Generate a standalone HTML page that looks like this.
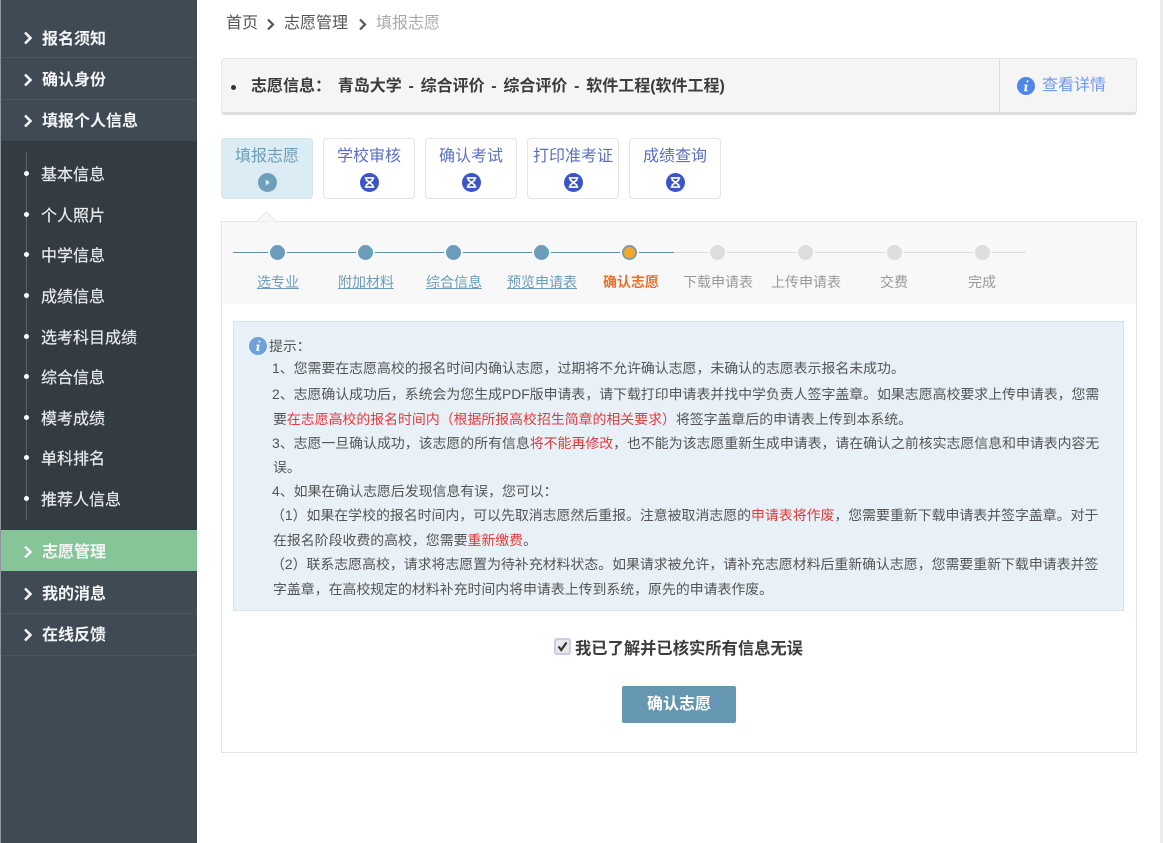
<!DOCTYPE html>
<html lang="zh"><head><meta charset="utf-8"><title>确认志愿</title>
<style>
*{box-sizing:border-box}
html,body{margin:0;padding:0;width:1163px;height:843px;overflow:hidden;background:#fff}
body{position:relative;font-family:"Liberation Sans","Noto Sans CJK SC",sans-serif;color:#444}
.a{position:absolute;white-space:nowrap}
#side{position:absolute;left:0;top:0;width:197px;height:843px;background:#3f4a54;border-left:1px solid #8d949a}
.sep{position:absolute;left:1px;width:196px;height:1px;background:#4a555f}
.m{position:absolute;left:42px;font-size:16px;font-weight:700;color:#f4f5f6;line-height:22px;white-space:nowrap}
.chev{position:absolute;left:23px;width:10px;height:14px}
.s{position:absolute;left:41px;font-size:16px;color:#e8eaec;line-height:22px;white-space:nowrap;-webkit-text-stroke:.2px #e8eaec}
.dot{position:absolute;left:24px;width:5px;height:5px;border-radius:50%;background:#fff}
.tab{position:absolute;top:138px;height:61px;width:92px;border:1px solid #e4e4e4;border-radius:4px;background:#fff;text-align:center;color:#5a6fc4;font-size:16px;line-height:22px;padding-top:7px;white-space:nowrap}
.tab svg{position:absolute;left:36px;top:34px}
.st{position:absolute;top:272px;width:90px;text-align:center;font-size:14px;line-height:20px;white-space:nowrap}
.st.d{color:#6b9dbb;text-decoration:underline}
.st.g{color:#999}
.c{position:absolute;top:245px;width:15px;height:15px;border-radius:50%;border:2px solid #6b9dbb;background:#6b9dbb}
.c.g{background:#ddd;border-color:#ddd}
.l{position:absolute;left:248px;font-size:13.9px;line-height:20px;color:#555;white-space:nowrap}
.l.i{left:272px}
.l b{font-weight:400;color:#e23b3b}
</style></head><body>

<div id="side">
<div style="position:absolute;left:0;top:141px;width:196px;height:389px;background:#333b43"></div>
<div style="position:absolute;left:0;top:530px;width:196px;height:41px;background:#86c598"></div>
<div class="sep" style="top:57px;left:0"></div><div class="sep" style="top:99px;left:0"></div>
<div class="sep" style="top:613px;left:0"></div><div class="sep" style="top:655px;left:0"></div>
<div style="position:absolute;left:25px;top:152px;width:1px;height:368px;background:#59626b"></div>
</div>
<svg class="chev" style="top:31px" viewBox="0 0 10 14"><path d="M2 1.5 7.5 7 2 12.5" fill="none" stroke="#f4f5f6" stroke-width="2.6"/></svg><div class="m" style="top:29px">报名须知</div>
<svg class="chev" style="top:73px" viewBox="0 0 10 14"><path d="M2 1.5 7.5 7 2 12.5" fill="none" stroke="#f4f5f6" stroke-width="2.6"/></svg><div class="m" style="top:70px">确认身份</div>
<svg class="chev" style="top:114px" viewBox="0 0 10 14"><path d="M2 1.5 7.5 7 2 12.5" fill="none" stroke="#f4f5f6" stroke-width="2.6"/></svg><div class="m" style="top:111px">填报个人信息</div>
<div class="dot" style="top:171px"></div><div class="s" style="top:165px">基本信息</div>
<div class="dot" style="top:212px"></div><div class="s" style="top:206px">个人照片</div>
<div class="dot" style="top:252px"></div><div class="s" style="top:246px">中学信息</div>
<div class="dot" style="top:293px"></div><div class="s" style="top:287px">成绩信息</div>
<div class="dot" style="top:334px"></div><div class="s" style="top:328px">选考科目成绩</div>
<div class="dot" style="top:374px"></div><div class="s" style="top:368px">综合信息</div>
<div class="dot" style="top:415px"></div><div class="s" style="top:409px">模考成绩</div>
<div class="dot" style="top:455px"></div><div class="s" style="top:449px">单科排名</div>
<div class="dot" style="top:496px"></div><div class="s" style="top:490px">推荐人信息</div>
<svg class="chev" style="top:545px" viewBox="0 0 10 14"><path d="M2 1.5 7.5 7 2 12.5" fill="none" stroke="#f4f5f6" stroke-width="2.6"/></svg><div class="m" style="top:542px">志愿管理</div>
<svg class="chev" style="top:587px" viewBox="0 0 10 14"><path d="M2 1.5 7.5 7 2 12.5" fill="none" stroke="#f4f5f6" stroke-width="2.6"/></svg><div class="m" style="top:584px">我的消息</div>
<svg class="chev" style="top:628px" viewBox="0 0 10 14"><path d="M2 1.5 7.5 7 2 12.5" fill="none" stroke="#f4f5f6" stroke-width="2.6"/></svg><div class="m" style="top:625px">在线反馈</div>

<div style="position:absolute;left:1160px;top:0;width:3px;height:843px;background:#ececec"></div>

<div class="a" style="left:226px;top:13px;font-size:16px;line-height:22px;color:#555">首页</div>
<svg class="a" style="left:266px;top:18px" width="10" height="13" viewBox="0 0 10 13"><path d="M2 1.5 7 6.5 2 11.5" fill="none" stroke="#555" stroke-width="2.2"/></svg>
<div class="a" style="left:284px;top:13px;font-size:16px;line-height:22px;color:#555">志愿管理</div>
<svg class="a" style="left:358px;top:18px" width="10" height="13" viewBox="0 0 10 13"><path d="M2 1.5 7 6.5 2 11.5" fill="none" stroke="#555" stroke-width="2.2"/></svg>
<div class="a" style="left:376px;top:13px;font-size:16px;line-height:22px;color:#aaa">填报志愿</div>

<div style="position:absolute;left:221px;top:58px;width:916px;height:57px;background:#f5f5f5;border:1px solid #e6e6e6;border-bottom:3px solid #ddd;border-radius:4px"></div>
<div style="position:absolute;left:999px;top:59px;width:1px;height:53px;background:#dcdcdc"></div>
<div class="a" style="left:231px;top:85px;width:5px;height:5px;border-radius:50%;background:#333"></div>
<div class="a" style="left:251px;top:76px;font-size:16px;font-weight:700;line-height:22px;color:#3c3c3c;word-spacing:2.3px">志愿信息： 青岛大学 - 综合评价 - 综合评价 - 软件工程(软件工程)</div>
<svg class="a" style="left:1017px;top:77px" width="18" height="18" viewBox="0 0 17 17"><circle cx="8.5" cy="8.5" r="8.5" fill="#4f86e8"/><path d="M9.3 3.2h1.6l-.3 1.7H9zM7 7.2h3l-1 5h1l-.3 1.2H6.7l1-5h-1z" fill="#fff"/></svg>
<div class="a" style="left:1042px;top:75px;font-size:16px;line-height:22px;color:#6f9be8">查看详情</div>

<div class="tab" style="left:221px;background:#dcecf4;border-color:#d3e4ec;color:#6c9db8">填报志愿<svg width="19" height="19" viewBox="0 0 18 18"><circle cx="9" cy="9" r="9" fill="#6fa0ba"/><path d="M7.3 6l4 3-4 3z" fill="#dcecf4"/></svg></div>
<div class="tab" style="left:323px">学校审核<svg width="19" height="19" viewBox="0 0 18 18"><circle cx="9" cy="9" r="9" fill="#3b55c8"/><path d="M4.5 4.7h9M4.5 13.3h9M6 5v1.6L12 11.4V13M12 5v1.6L6 11.4V13" fill="none" stroke="#fff" stroke-width="1.6"/></svg></div>
<div class="tab" style="left:425px">确认考试<svg width="19" height="19" viewBox="0 0 18 18"><circle cx="9" cy="9" r="9" fill="#3b55c8"/><path d="M4.5 4.7h9M4.5 13.3h9M6 5v1.6L12 11.4V13M12 5v1.6L6 11.4V13" fill="none" stroke="#fff" stroke-width="1.6"/></svg></div>
<div class="tab" style="left:527px">打印准考证<svg width="19" height="19" viewBox="0 0 18 18"><circle cx="9" cy="9" r="9" fill="#3b55c8"/><path d="M4.5 4.7h9M4.5 13.3h9M6 5v1.6L12 11.4V13M12 5v1.6L6 11.4V13" fill="none" stroke="#fff" stroke-width="1.6"/></svg></div>
<div class="tab" style="left:629px">成绩查询<svg width="19" height="19" viewBox="0 0 18 18"><circle cx="9" cy="9" r="9" fill="#3b55c8"/><path d="M4.5 4.7h9M4.5 13.3h9M6 5v1.6L12 11.4V13M12 5v1.6L6 11.4V13" fill="none" stroke="#fff" stroke-width="1.6"/></svg></div>

<div style="position:absolute;left:221px;top:221px;width:916px;height:532px;background:#fff;border:1px solid #e3e3e3"></div>
<div style="position:absolute;left:222px;top:222px;width:914px;height:82px;background:#f8f8f8"></div>
<div style="position:absolute;left:259px;top:214px;width:15px;height:15px;background:#f8f8f8;border-left:1px solid #e3e3e3;border-top:1px solid #e3e3e3;transform:rotate(45deg);clip-path:polygon(0 0,100% 0,0 100%)"></div>

<div style="position:absolute;left:233px;top:252px;width:441px;height:1px;background:#6690aa"></div>
<div style="position:absolute;left:674px;top:252px;width:352px;height:1px;background:#ddd"></div>
<div style="position:absolute;left:268px;top:244px;width:19px;height:17px;background:#f8f8f8"></div><div class="c" style="left:270px"></div>
<div style="position:absolute;left:356px;top:244px;width:19px;height:17px;background:#f8f8f8"></div><div class="c" style="left:358px"></div>
<div style="position:absolute;left:444px;top:244px;width:19px;height:17px;background:#f8f8f8"></div><div class="c" style="left:446px"></div>
<div style="position:absolute;left:532px;top:244px;width:19px;height:17px;background:#f8f8f8"></div><div class="c" style="left:534px"></div>
<div style="position:absolute;left:620px;top:244px;width:19px;height:17px;background:#f8f8f8"></div><div class="c" style="left:622px;background:#efa82c;border-color:#7e9aa0"></div>
<div style="position:absolute;left:708px;top:244px;width:19px;height:17px;background:#f8f8f8"></div><div class="c g" style="left:710px"></div>
<div style="position:absolute;left:796px;top:244px;width:19px;height:17px;background:#f8f8f8"></div><div class="c g" style="left:798px"></div>
<div style="position:absolute;left:885px;top:244px;width:19px;height:17px;background:#f8f8f8"></div><div class="c g" style="left:887px"></div>
<div style="position:absolute;left:973px;top:244px;width:19px;height:17px;background:#f8f8f8"></div><div class="c g" style="left:975px"></div>

<div class="st d" style="left:233px">选专业</div>
<div class="st d" style="left:321px">附加材料</div>
<div class="st d" style="left:409px">综合信息</div>
<div class="st d" style="left:497px">预览申请表</div>
<div class="st" style="left:586px;color:#e8702a;font-weight:700">确认志愿</div>
<div class="st g" style="left:673px">下载申请表</div>
<div class="st g" style="left:761px">上传申请表</div>
<div class="st g" style="left:849px">交费</div>
<div class="st g" style="left:937px">完成</div>

<div style="position:absolute;left:233px;top:321px;width:891px;height:290px;background:#e8f1f7;border:1px solid #d3e5ef"></div>
<svg class="a" style="left:249px;top:337px" width="18" height="18" viewBox="0 0 18 18"><circle cx="9" cy="9" r="9" fill="#6fa3d8"/><path d="M9.8 3.6h1.7l-.3 1.8H9.5zM7.5 7.6h3l-1 5h1l-.3 1.2H7.2l1-5h-1z" fill="#fff"/></svg>
<div class="l" style="left:269px;top:336px">提示：</div>
<div class="l i" style="top:358px">1、您需要在志愿高校的报名时间内确认志愿，过期将不允许确认志愿，未确认的志愿表示报名未成功。</div>
<div class="l i" style="top:384px">2、志愿确认成功后，系统会为您生成PDF版申请表，请下载打印申请表并找中学负责人签字盖章。如果志愿高校要求上传申请表，您需</div>
<div class="l" style="left:273px;top:409px">要<b>在志愿高校的报名时间内（根据所报高校招生简章的相关要求）</b>将签字盖章后的申请表上传到本系统。</div>
<div class="l i" style="top:433px">3、志愿一旦确认成功，该志愿的所有信息<b>将不能再修改</b>，也不能为该志愿重新生成申请表，请在确认之前核实志愿信息和申请表内容无</div>
<div class="l" style="left:273px;top:457px">误。</div>
<div class="l i" style="top:481px">4、如果在确认志愿后发现信息有误，您可以：</div>
<div class="l" style="left:271px;top:505px">（1）如果在学校的报名时间内，可以先取消志愿然后重报。注意被取消志愿的<b>申请表将作废</b>，您需要重新下载申请表并签字盖章。对于</div>
<div class="l" style="left:273px;top:530px">在报名阶段收费的高校，您需要<b>重新缴费</b>。</div>
<div class="l" style="left:271px;top:554px">（2）联系志愿高校，请求将志愿置为待补充材料状态。如果请求被允许，请补充志愿材料后重新确认志愿，您需要重新下载申请表并签</div>
<div class="l" style="left:273px;top:579px">字盖章，在高校规定的材料补充时间内将申请表上传到系统，原先的申请表作废。</div>

<div class="a" style="left:554px;top:638px;width:17px;height:17px;background:#c5cdea;border-radius:3px"></div>
<svg class="a" style="left:556px;top:640px" width="13" height="13" viewBox="0 0 13 13"><rect width="13" height="13" rx="1" fill="#e8e8e8"/><path d="M2.5 6.5 5.2 10 10.5 2.5" fill="none" stroke="#333" stroke-width="2.2"/></svg>
<div class="a" style="left:575px;top:638px;font-size:16.3px;font-weight:700;line-height:22px;color:#3c3c3c">我已了解并已核实所有信息无误</div>

<div class="a" style="left:622px;top:686px;width:114px;height:37px;background:#6697b1;border-radius:2px;color:#fff;font-size:16px;font-weight:700;line-height:38px;text-align:center">确认志愿</div>
</body></html>
